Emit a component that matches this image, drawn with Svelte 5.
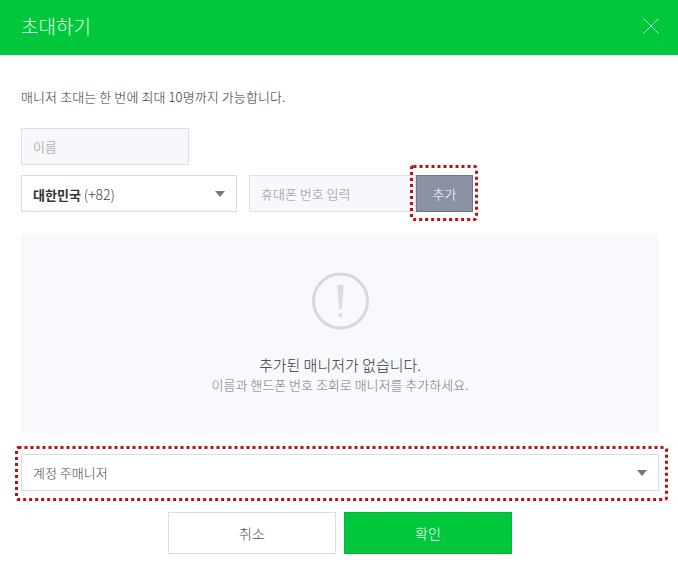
<script>
    let name = $state('');
    let phone = $state('');
</script>

<div class="modal">
    <header class="head">
        <h1>초대하기</h1>
        <button class="close" aria-label="닫기">
            <svg width="16" height="16" viewBox="0 0 16 16"><path d="M0.5 0.5 15.5 15.5M15.5 0.5 0.5 15.5" stroke="#b5efc6" stroke-width="1" fill="none" /></svg>
        </button>
    </header>

    <div class="body">
        <p class="desc">매니저 초대는 한 번에 최대 10명까지 가능합니다.</p>

        <input class="field name" placeholder="이름" bind:value={name} />

        <div class="phone-row">
            <div class="select country">
                <span><b>대한민국</b> <em>(+82)</em></span>
                <i class="caret"></i>
            </div>
            <div class="phone-group">
                <input class="field phone" placeholder="휴대폰 번호 입력" bind:value={phone} />
                <button class="add">추가</button>
                <svg class="mark mark-add" width="68" height="56">
                    <rect x="1.5" y="1.5" width="65" height="53" rx="2" />
                </svg>
            </div>
        </div>

        <div class="empty">
            <svg class="warn" width="58" height="58" viewBox="0 0 58 58">
                <circle cx="29.5" cy="29" r="27" fill="none" stroke="#d5d8df" stroke-width="3" />
                <path d="M26.3 13h6.4l-1.8 24h-2.8z" fill="#d9dce3" />
                <rect x="28" y="41" width="3" height="4" fill="#d9dce3" />
            </svg>
            <strong>추가된 매니저가 없습니다.</strong>
            <span>이름과 핸드폰 번호 조회로 매니저를 추가하세요.</span>
        </div>

        <div class="role-wrap">
            <div class="select role">
                <span>계정 주매니저</span>
                <i class="caret"></i>
            </div>
            <svg class="mark mark-role" width="653" height="55">
                <rect x="1.5" y="1.5" width="650" height="52" rx="2" />
            </svg>
        </div>

        <div class="actions">
            <button class="btn cancel">취소</button>
            <button class="btn ok">확인</button>
        </div>
    </div>
</div>

<style>
    :global(body) {
        margin: 0;
        background: #fff;
    }

    .modal {
        width: 678px;
        height: 580px;
        overflow: hidden;
        font-family: "Noto Sans CJK KR", "Noto Sans", sans-serif;
        color: #333;
    }

    .head {
        box-sizing: border-box;
        height: 55px;
        padding: 0 19px 4px 21px;
        background: #00c73c;
        display: flex;
        align-items: center;
        justify-content: space-between;
    }

    .head h1 {
        margin: 0;
        font-size: 19px;
        font-weight: 300;
        color: #e4f9ea;
    }

    .close {
        padding: 0;
        border: 0;
        background: none;
        display: flex;
    }

    .body {
        padding: 0 19px 0 21px;
    }

    .desc {
        margin: 0;
        padding-top: 33px;
        height: 40px;
        line-height: 18px;
        font-size: 13px;
        font-weight: 300;
        letter-spacing: 0.1px;
        color: #333;
    }

    .field {
        box-sizing: border-box;
        height: 37px;
        padding: 0 11px;
        border: 1px solid #dcdfe6;
        border-radius: 0;
        background: #f6f8fc;
        font: inherit;
        font-size: 13px;
        font-weight: 300;
        outline: none;
    }

    .field::placeholder {
        color: #8f8f8f;
        opacity: 1;
    }

    .name {
        display: block;
        width: 168px;
    }

    .phone-row {
        margin-top: 10px;
        display: flex;
        gap: 12px;
    }

    .select {
        box-sizing: border-box;
        height: 37px;
        padding: 0 11px;
        border: 1px solid #dcdcdc;
        background: #fff;
        font-size: 13px;
        font-weight: 300;
        display: flex;
        align-items: center;
        justify-content: space-between;
    }

    .select b {
        font-weight: 700;
    }

    .country {
        width: 216px;
        color: #444;
    }

    .country b {
        color: #333;
    }

    .country em {
        font-style: normal;
        font-size: 14px;
    }

    .caret {
        width: 0;
        height: 0;
        border-left: 5.5px solid transparent;
        border-right: 5.5px solid transparent;
        border-top: 6px solid #777;
    }

    .phone-group {
        position: relative;
        display: flex;
    }

    .phone {
        width: 167px;
    }

    .add {
        box-sizing: border-box;
        width: 57px;
        height: 37px;
        padding: 0;
        border: 1px solid #6f7686;
        background: #8b92a4;
        color: #fff;
        font: inherit;
        font-size: 13px;
        font-weight: 300;
    }

    .mark {
        position: absolute;
        pointer-events: none;
    }

    .mark rect {
        fill: none;
        stroke: #c30d0d;
        stroke-width: 3;
        stroke-dasharray: 3 3;
    }

    .mark-add {
        left: 161px;
        top: -10px;
    }

    .empty {
        margin-top: 21px;
        height: 200px;
        box-sizing: border-box;
        padding-top: 39px;
        background: #f7f9fd;
        display: flex;
        flex-direction: column;
        align-items: center;
    }

    .warn {
        display: block;
    }

    .empty strong {
        margin-top: 25px;
        font-size: 15px;
        line-height: 20px;
        font-weight: 300;
        color: #333;
    }

    .empty span {
        margin-top: 1px;
        font-size: 13px;
        font-weight: 300;
        line-height: 18px;
        color: #777;
    }

    .role-wrap {
        position: relative;
        margin-top: 21px;
    }

    .role {
        width: 638px;
        color: #444;
    }

    .mark-role {
        left: -6px;
        top: -8px;
    }

    .actions {
        margin-top: 21px;
        display: flex;
        justify-content: center;
        gap: 8px;
    }

    .btn {
        box-sizing: border-box;
        width: 168px;
        height: 42px;
        padding: 0;
        font: inherit;
        font-size: 14px;
        font-weight: 300;
    }

    .cancel {
        border: 1px solid #dcdcdc;
        background: #fff;
        color: #555;
    }

    .ok {
        border: 1px solid #0aae3d;
        background: #00c73c;
        color: #fff;
    }
</style>
